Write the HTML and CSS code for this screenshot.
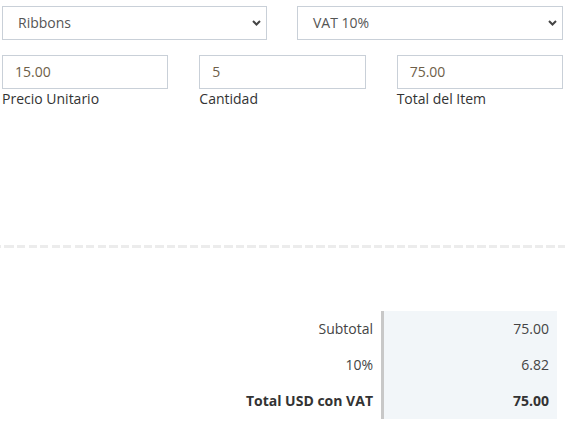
FILE: index.html
```html
<!DOCTYPE html>
<html lang="es">
<head>
<meta charset="utf-8">
<link rel="stylesheet" href="styles.css">
</head>
<body>
<div class="page">
  <div class="form">
    <div class="row-two">
      <div class="select">
        <span class="select-text">Ribbons</span>
        <svg class="chev" width="9" height="6" viewBox="0 0 9 6"><path d="M1 1 L4.5 4.5 L8 1" fill="none" stroke="#444" stroke-width="2"/></svg>
      </div>
      <div class="select">
        <span class="select-text">VAT 10%</span>
        <svg class="chev" width="9" height="6" viewBox="0 0 9 6"><path d="M1 1 L4.5 4.5 L8 1" fill="none" stroke="#444" stroke-width="2"/></svg>
      </div>
    </div>
    <div class="row-three">
      <div class="field">
        <div class="input">15.00</div>
        <div class="label">Precio Unitario</div>
      </div>
      <div class="field">
        <div class="input">5</div>
        <div class="label">Cantidad</div>
      </div>
      <div class="field">
        <div class="input">75.00</div>
        <div class="label">Total del Item</div>
      </div>
    </div>
  </div>
  <div class="separator"></div>
  <div class="totals">
    <div class="totals-table">
      <div class="t-label">Subtotal</div>
      <div class="t-value">75.00</div>
      <div class="t-label">10%</div>
      <div class="t-value">6.82</div>
      <div class="t-label strong">Total USD con VAT</div>
      <div class="t-value strong">75.00</div>
    </div>
  </div>
</div>
</body>
</html>
```

FILE: styles.css
```css
html, body {
  margin: 0;
  padding: 0;
  background: #fff;
}

body {
  font-family: "Open Sans", "Liberation Sans", sans-serif;
  font-size: 14px;
  line-height: 20px;
  color: #444;
}

.page {
  width: 565px;
  padding-top: 6px;
}

.form {
  padding: 0 2px;
  width: 561px;
}

.row-two {
  display: grid;
  grid-template-columns: 265px 266px;
  column-gap: 30px;
}

.select {
  height: 34px;
  box-sizing: border-box;
  border: 1px solid #c9d0d8;
  display: flex;
  align-items: center;
  justify-content: space-between;
  padding: 0 5px 0 15px;
  color: #555;
}

.chev {
  display: block;
}

.row-three {
  margin-top: 15px;
  display: grid;
  grid-template-columns: repeat(3, 1fr);
  column-gap: 31px;
}

.input {
  height: 34px;
  box-sizing: border-box;
  border: 1px solid #c9d0d8;
  padding: 6px 12px;
  color: #6e5e48;
}

.label {
  color: #333;
}

.separator {
  margin-top: 136px;
  height: 3px;
  background-image: repeating-linear-gradient(to right, #ececec 0, #ececec 8px, transparent 8px, transparent 11.5px);
  background-position: 6px 0;
}

.totals {
  margin-top: 63px;
  display: flex;
  justify-content: flex-end;
  padding-right: 8px;
}

.totals-table {
  display: grid;
  grid-template-columns: auto 173px;
}

.t-label {
  text-align: right;
  padding: 8px 8px 8px 0;
  border-right: 3px solid #c8c8c8;
  color: #444;
}

.t-value {
  text-align: right;
  padding: 8px 8px;
  background: #f2f6f9;
  color: #444;
}

.strong {
  font-weight: 700;
  color: #333;
}
```
